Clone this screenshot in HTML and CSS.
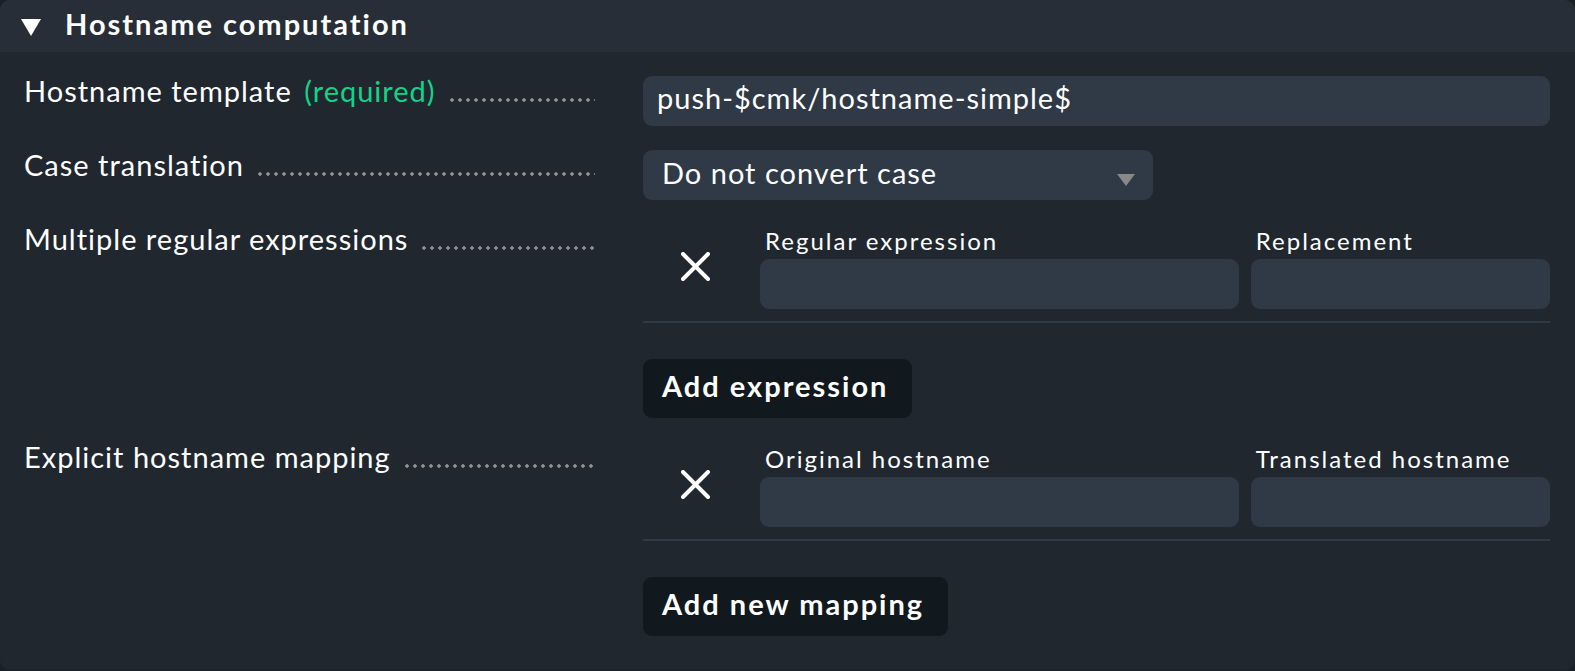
FILE: index.html
```html
<!DOCTYPE html>
<html lang="en">
<head>
<meta charset="utf-8">
<title>Hostname computation</title>
<link rel="stylesheet" href="styles.css">
</head>
<body>
<form class="panel">
  <h2 class="panel-header">
    <button type="button" class="panel-toggle" aria-expanded="true">
      <svg class="toggle-icon" viewBox="0 0 20 17" aria-hidden="true"><path d="M0 0H20L10 17Z"/></svg>
      <span>Hostname computation</span>
    </button>
  </h2>
  <div class="panel-body">
    <div class="row">
      <label class="row-label" for="template"><span>Hostname template <span class="required">(required)</span></span></label>
      <input class="field" id="template" type="text" value="push-$cmk/hostname-simple$">
    </div>
    <div class="row">
      <label class="row-label" for="case"><span>Case translation</span></label>
      <div class="select-wrap">
        <select class="field select" id="case"><option>Do not convert case</option></select>
        <svg class="select-arrow" viewBox="0 0 18 12" aria-hidden="true"><path d="M0 0H18L9 12Z"/></svg>
      </div>
    </div>
    <div class="row" role="group" aria-labelledby="regex-label">
      <div class="row-label" id="regex-label"><span>Multiple regular expressions</span></div>
      <div class="list">
        <div class="entry">
          <button type="button" class="remove" aria-label="Remove expression">
            <svg class="remove-icon" viewBox="0 0 29 29" aria-hidden="true"><path d="M2 2L27 27M27 2L2 27"/></svg>
          </button>
          <div class="entry-field">
            <label class="caption" for="regex">Regular expression</label>
            <input class="field" id="regex" type="text">
          </div>
          <div class="entry-field">
            <label class="caption" for="replacement">Replacement</label>
            <input class="field" id="replacement" type="text">
          </div>
        </div>
        <button type="button" class="add">Add expression</button>
      </div>
    </div>
    <div class="row" role="group" aria-labelledby="mapping-label">
      <div class="row-label" id="mapping-label"><span>Explicit hostname mapping</span></div>
      <div class="list">
        <div class="entry">
          <button type="button" class="remove" aria-label="Remove mapping">
            <svg class="remove-icon" viewBox="0 0 29 29" aria-hidden="true"><path d="M2 2L27 27M27 2L2 27"/></svg>
          </button>
          <div class="entry-field">
            <label class="caption" for="original">Original hostname</label>
            <input class="field" id="original" type="text">
          </div>
          <div class="entry-field">
            <label class="caption" for="translated">Translated hostname</label>
            <input class="field" id="translated" type="text">
          </div>
        </div>
        <button type="button" class="add">Add new mapping</button>
      </div>
    </div>
  </div>
</form>
</body>
</html>
```
FILE: styles.css
```css
* { box-sizing: border-box; }

body {
  margin: 0;
  background: #1a2027;
  color: #fff;
  font: 29px/30px Lato, "Liberation Sans", sans-serif;
  letter-spacing: 1px;
}

button, input, select {
  margin: 0;
  border: 0;
  color: inherit;
  font: inherit;
  letter-spacing: inherit;
}

.panel {
  border-radius: 10px;
  background: #21272f;
  overflow: hidden;
}

.panel-header {
  margin: 0;
  background: #272e37;
  font-size: 29px;
}

.panel-toggle {
  display: flex;
  align-items: center;
  gap: 24px;
  width: 100%;
  padding: 9px 21px 13px;
  background: none;
  font-weight: 700;
  letter-spacing: 2px;
}

.toggle-icon {
  width: 20px;
  height: 17px;
  margin-top: 6px;
  fill: #fff;
}

.panel-body {
  display: grid;
  gap: 24px;
  padding: 24px 25px 34px 24px;
}

.row {
  display: grid;
  grid-template-columns: 571px 1fr;
  gap: 48px;
  align-items: start;
}

.row-label {
  display: flex;
  gap: 14px;
  white-space: nowrap;
}

.row-label::after {
  content: "";
  flex: 1;
  height: 4px;
  margin-top: 22px;
  background: radial-gradient(circle at 2px 2px, #8f9297 1px, #8f929799 2px, transparent 2px) 0 0 / 8px 4px repeat-x;
}

.required {
  margin-left: 4px;
  color: #13d389;
}

.field {
  display: block;
  width: 100%;
  height: 50px;
  padding: 0 14px 8px;
  border-radius: 9px;
  background: #303946;
}

.select-wrap {
  position: relative;
  max-width: 510px;
}

.select {
  appearance: none;
  padding: 0 48px 4px 19px;
}

.select-arrow {
  position: absolute;
  top: 24px;
  right: 18px;
  width: 18px;
  height: 12px;
  fill: #888;
  pointer-events: none;
}

.entry {
  display: grid;
  grid-template-columns: 105px 8fr 5fr;
  gap: 12px;
  align-items: center;
  padding-bottom: 12px;
  border-bottom: 2px solid #303946;
}

.remove {
  display: flex;
  justify-content: center;
  padding: 12px;
  background: none;
}

.remove-icon {
  width: 29px;
  height: 29px;
  fill: none;
  stroke: #fff;
  stroke-width: 4;
  stroke-linecap: round;
}

.caption {
  display: block;
  padding: 0 5px 2px;
  font-size: 24px;
  line-height: 33px;
  letter-spacing: 2px;
}

.add {
  height: 59px;
  margin-top: 36px;
  padding: 0 24px 6px 19px;
  border-radius: 9px;
  background: #11181e;
  font-weight: 700;
  letter-spacing: 2px;
}
```
